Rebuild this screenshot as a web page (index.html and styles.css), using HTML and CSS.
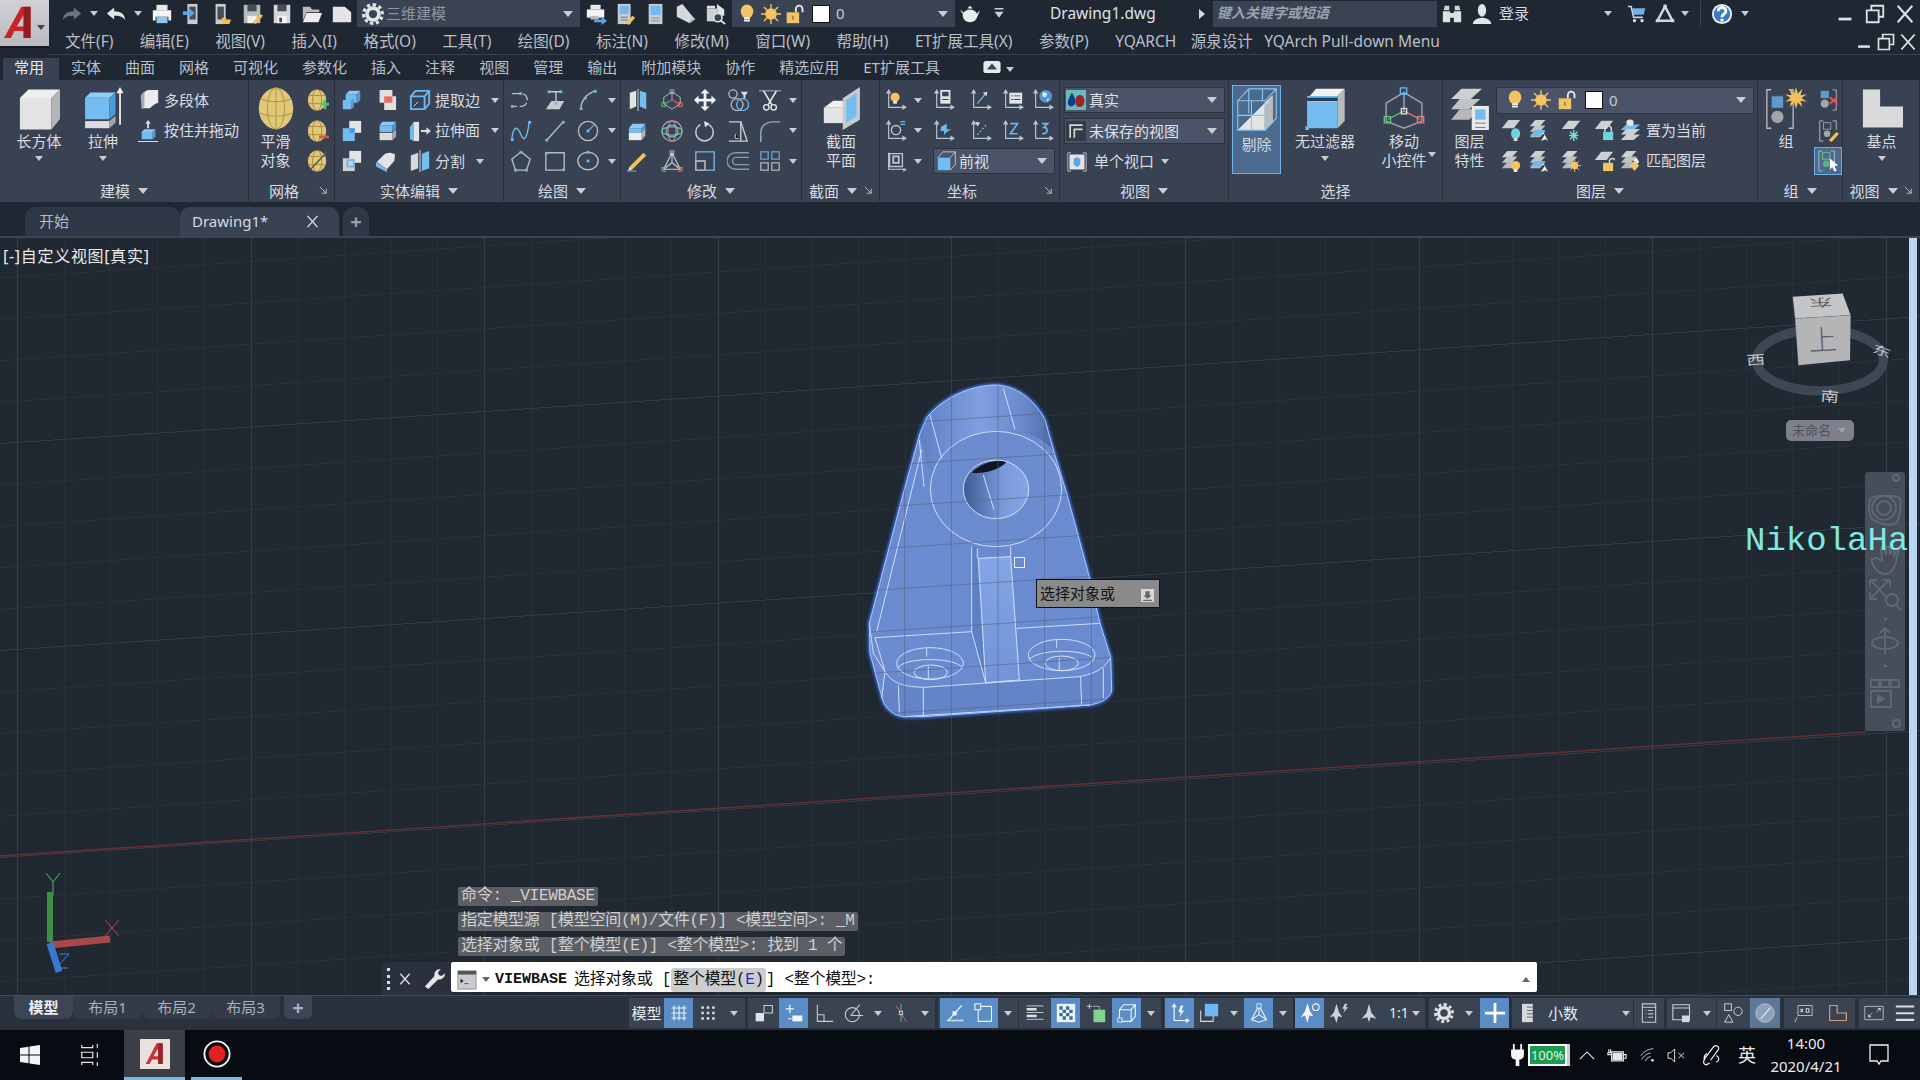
FILE: index.html
```html
<!DOCTYPE html>
<html lang="zh-CN">
<head>
<meta charset="utf-8">
<title>Drawing1.dwg</title>
<link rel="stylesheet" href="styles.css">
</head>
<body>
<svg class="defs" aria-hidden="true">
<defs>
<symbol id="redo" viewBox="0 0 24 24"><path fill="currentColor" d="M14 5l8 6.500-8 6.500v-4c-5 0-9 .5-12 4.500C2.500 12 7 9 14 9z"/></symbol>
<symbol id="undo" viewBox="0 0 24 24"><path fill="currentColor" d="M10 5l-8 6.500 8 6.500v-4c5 0 9 .5 12 4.500C21.500 12 17 9 10 9z"/></symbol>
<symbol id="print" viewBox="0 0 24 24"><path fill="#e8e9ea" d="M6 2h12v6H6z"/><path fill="#f5f5f5" d="M2 8h20v11h-3v-4H5v4H2z"/><path fill="#8cc4ee" d="M6 15h12v7H6z"/></symbol>
<symbol id="printgo" viewBox="0 0 24 24"><path fill="#e8e9ea" d="M6 2h11v5H6z"/><path fill="#f5f5f5" d="M2 7h19v9H2z"/><path fill="#bbb" d="M6 14h9v4H6z"/><path fill="#58a6e6" d="M10 18h8v-3l6 4.500-6 4.500v-3h-8z"/></symbol>
<symbol id="phone" viewBox="0 0 24 24"><path fill="#c9cbce" d="M7 1h11v22H7z"/><path fill="#454d59" d="M9 4h7v14H9z"/><path fill="#58a6e6" d="M2 9h7V6l6 5-6 5v-3H2z"/></symbol>
<symbol id="phonef" viewBox="0 0 24 24"><path fill="#c9cbce" d="M5 1h11v22H5z"/><path fill="#454d59" d="M7 4h7v14H7z"/><path fill="#f0c25a" d="M12 16h4l1 2h5l-2 5h-8z"/></symbol>
<symbol id="savepen" viewBox="0 0 24 24"><path fill="#b7b9bc" d="M3 2h18v20H3z"/><path fill="#454d59" d="M7 2h10v7H7z"/><path fill="#efefef" d="M7 14h10v8H7z"/><path fill="#f0c25a" d="M13 21l8-9 3 2-8 9z"/></symbol>
<symbol id="save" viewBox="0 0 24 24"><path fill="#d5d6d8" d="M3 2h18v20H3z"/><path fill="#454d59" d="M7 2h10v7H7z"/><path fill="#f5f5f5" d="M7 14h10v8H7z"/><path fill="#454d59" d="M9 16h3v5H9z"/></symbol>
<symbol id="open" viewBox="0 0 24 24"><path fill="#b7b9bc" d="M2 4h8l2 3h8v3H6l-4 9z"/><path fill="#ececec" d="M6 11h17l-4 10H2z"/></symbol>
<symbol id="newd" viewBox="0 0 24 24"><path fill="#e3e4e6" d="M2 4h13l7 6v11H2z"/></symbol>
<symbol id="gear" viewBox="0 0 24 24"><path fill="none" stroke="currentColor" stroke-width="3.500" stroke-dasharray="3.500 2.780" d="M12 1.800a10.200 10.200 0 1 1-.01 0z"/><circle cx="12" cy="12" r="6.500" fill="none" stroke="currentColor" stroke-width="4"/></symbol>
<symbol id="mon" viewBox="0 0 24 24"><path fill="#c9cbce" d="M3 1h14v22H3z"/><path fill="#73b8ee" d="M5 3h10v9H5z"/><path fill="#777" d="M6 15h8v1H6zM6 18h8v1H6z"/><path fill="#f0c25a" d="M12 22l7-8 3 2-7 8z"/></symbol>
<symbol id="mon2" viewBox="0 0 24 24"><path fill="#c9cbce" d="M4 1h15v22H4z"/><path fill="#73b8ee" d="M6 3h11v10H6z"/><path fill="#777" d="M7 16h9v1H7zM7 19h9v1H7z"/></symbol>
<symbol id="roll" viewBox="0 0 24 24"><path fill="#d7d8da" d="M2 4l6-3 14 17-6 4-14-7z"/><path fill="#9a9c9f" d="M16 22l6-4v-2l-6 4z"/></symbol>
<symbol id="findd" viewBox="0 0 24 24"><path fill="#e0e1e3" d="M2 3h9v3H2zM13 1l8 6v7h-7V7h-1z"/><path fill="#d0d1d3" d="M2 6h12v14H2z"/><circle cx="14" cy="16" r="4.500" fill="#3a4354" stroke="#ddd" stroke-width="1.800"/><path stroke="#ddd" stroke-width="2" d="M17 19l5 4"/></symbol>
<symbol id="bulb" viewBox="0 0 24 24"><ellipse cx="12" cy="9" rx="7.500" ry="8.500" fill="#f3c465"/><path fill="#f5f5f5" d="M8.500 16h7v5h-7z"/><path fill="#888" d="M8.500 18h7v1h-7z"/></symbol>
<symbol id="sun" viewBox="0 0 24 24"><circle cx="12" cy="12" r="7" fill="#f3c465"/><path stroke="#f3c465" stroke-width="1.600" d="M12 0v24M0 12h24M3.500 3.500l17 17M20.500 3.500l-17 17"/></symbol>
<symbol id="lock" viewBox="0 0 24 24"><rect x="2" y="10" width="15" height="13" fill="#f3c465"/><path fill="none" stroke="#e9e9e9" stroke-width="2.200" d="M13 10V6a4 4 0 0 1 8 0v4"/><path stroke="#8a6b25" stroke-width="1.600" d="M9.500 14v5"/></symbol>
<symbol id="teapot" viewBox="0 0 24 24"><ellipse cx="12" cy="14" rx="8" ry="7" fill="#ebeced"/><path fill="#ebeced" d="M1 7l6 5-1 3zM23 8l-3 7-2-2zM9 6h6l-3-3z"/></symbol>
<symbol id="qmore" viewBox="0 0 24 24"><path fill="#c9ccd1" d="M6 4h12v2H6zM6 9h12l-6 8z"/></symbol>
<symbol id="bino" viewBox="0 0 24 24"><path fill="#cfd1d4" d="M3 8l1-5h5v5zM15 3h5l1 5h-6z"/><path fill="#dfe0e2" d="M2 9h8v12H2zM14 9h8v12h-8zM10 11h4v5h-4z"/></symbol>
<symbol id="user" viewBox="0 0 24 24"><ellipse cx="12" cy="8" rx="4.500" ry="7" fill="#e3e4e6"/><path fill="#e3e4e6" d="M2 23c0-4 5-7 10-7s10 3 10 7z"/></symbol>
<symbol id="cart" viewBox="0 0 24 24"><path fill="none" stroke="#cfd1d4" stroke-width="2" d="M1 3h4l3 13h11"/><path fill="#6eb2e8" d="M6 5h16l-2 8H8z"/><circle cx="9" cy="20" r="2" fill="#ddd"/><circle cx="18" cy="20" r="2" fill="#ddd"/></symbol>
<symbol id="adsk" viewBox="0 0 24 24"><path fill="none" stroke="#d4d6d9" stroke-width="3" d="M12 3L3 20h18z"/><path fill="#d4d6d9" d="M10 1h4v4h-4zM1 18h4v4H1zM19 18h4v4h-4z"/></symbol>
<symbol id="help" viewBox="0 0 24 24"><circle cx="12" cy="12" r="11" fill="#f0f1f2"/><circle cx="12" cy="12" r="9" fill="#3979c9"/><path fill="none" stroke="#fff" stroke-width="3.200" d="M7.800 9c0-5.500 8.400-5.500 8.400 0 0 3-4.200 3-4.200 6.500"/><path fill="#fff" d="M10.300 17.200h3.400v3h-3.400z"/></symbol>
<symbol id="wmin" viewBox="0 0 24 24"><path fill="#dfe1e4" d="M5 16h14v3H5z"/></symbol>
<symbol id="wmax" viewBox="0 0 24 24"><path fill="none" stroke="#dfe1e4" stroke-width="2" d="M8 8V3h13v12h-5M3 8h13v13H3z"/></symbol>
<symbol id="wx" viewBox="0 0 24 24"><path stroke="#dfe1e4" stroke-width="2.200" d="M4 3l16 18M20 3L4 21"/></symbol>

<symbol id="bigbox" viewBox="0 0 44 44"><path fill="#efefef" d="M11 2h33l-9 9H2z"/><path fill="#e3e3e4" d="M2 11h33v33H2z"/><path fill="#b4b5b7" d="M35 11l9-9v31l-9 11z"/></symbol>
<symbol id="extrude" viewBox="0 0 44 48"><path fill="#92cdf5" d="M8 6h28l-7 6H2z"/><path fill="#74bdf1" d="M2 12h27v24H2z"/><path fill="#4d9bd6" d="M29 12l7-6v24l-7 6z"/><path fill="#dcdcdc" d="M2 38h27v8H2z"/><path fill="#a3a4a6" d="M29 38l7-6v8l-7 6z"/><path stroke="#eee" stroke-width="2" d="M41 4v38"/><path fill="#eee" d="M41 0l4 7h-8z"/></symbol>
<symbol id="polys" viewBox="0 0 24 24"><path fill="#ececec" d="M6 6c0-3 3-5 7-5h9v14c-3 1-6 3-9 6H4z"/><path fill="#a8aaad" d="M3 9c0-3 2-5 4-6v16l-3 3z"/></symbol>
<symbol id="press" viewBox="0 0 24 24"><path fill="#8ccaf4" d="M7 10h12l-3 3H4z"/><path fill="#74bdf1" d="M4 13h12v8H4z"/><path fill="#4d9bd6" d="M16 13l3-3v8l-3 3z"/><path fill="#ddd" d="M11 0l3 4h-2v5h-2V4H8zM0 23h22v1H0z"/></symbol>
<symbol id="smooth" viewBox="0 0 40 50"><ellipse cx="20" cy="25" rx="20" ry="24" fill="#e0c878"/><g fill="none" stroke="#b6984a" stroke-width="1.200"><ellipse cx="20" cy="25" rx="10" ry="24"/><path d="M20 1v48M2 14c10 4 26 4 36 0M1 30c10 5 28 5 38 0"/></g></symbol>
<symbol id="mesh" viewBox="0 0 24 24"><ellipse cx="11" cy="12" rx="10" ry="11.500" fill="#e0c878"/><g fill="none" stroke="#a78a42"><ellipse cx="11" cy="12" rx="5" ry="11.500"/><path d="M2 7h18M1 16h20"/></g></symbol>
<symbol id="meshp" viewBox="0 0 24 24"><use href="#mesh"/><path fill="#55c065" d="M15 15h3v-3h3v3h3v3h-3v4h-3v-4h-3z"/></symbol>
<symbol id="meshm" viewBox="0 0 24 24"><use href="#mesh"/><path fill="#d7574d" d="M13 17h11v3H13z"/></symbol>
<symbol id="meshs" viewBox="0 0 24 24"><use href="#mesh"/><path stroke="#555" stroke-width="1.500" d="M3 22L22 2"/></symbol>
<symbol id="uni" viewBox="0 0 24 24"><path fill="#8ccaf4" d="M9 2h12l-4 4H5z"/><path fill="#74bdf1" d="M5 6h12v9H5zM2 12h9v10H2z"/><path fill="#4d9bd6" d="M17 6l4-4v10l-4 4zM11 12l3-2v10l-3 2z"/></symbol>
<symbol id="sub" viewBox="0 0 24 24"><path fill="#e0e0e1" d="M5 1h14v14H5zM10 8h13v15H10z"/><path fill="#e96a63" d="M10 8h9v7h-9z"/></symbol>
<symbol id="edges" viewBox="0 0 24 24"><path fill="none" stroke="#6eb8ee" stroke-width="2" d="M2 8h15v14H2zM2 8l5-6h15v14l-5 6M17 8l5-6"/><path fill="none" stroke="#ddd" d="M5 19l5-5"/></symbol>
<symbol id="inter" viewBox="0 0 24 24"><path fill="#e3e3e4" d="M9 1h13v13H9z"/><path fill="#74bdf1" d="M2 9h13v14H2z"/><path fill="#4d9bd6" d="M9 9h6v5H9z"/></symbol>
<symbol id="press2" viewBox="0 0 24 24"><path fill="#8ccaf4" d="M8 2h15l-4 4H5z"/><path fill="#74bdf1" d="M5 6h14v7H5z"/><path fill="#4d9bd6" d="M19 6l4-4v7l-4 4z"/><path fill="#dcdcdc" d="M5 14h14v8H5z"/><path fill="#aaa" d="M19 14l4-4v8l-4 4z"/></symbol>
<symbol id="extf" viewBox="0 0 24 24"><path fill="#6eb8ee" d="M1 8l4-6v21l-4-2z"/><path fill="#e4e4e5" d="M5 2h6v21H5z"/><path fill="#ddd" d="M13 11h6V8l5 4-5 4v-3h-6z"/></symbol>
<symbol id="unionb" viewBox="0 0 24 24"><path fill="#e3e3e4" d="M9 1h13v13H9z"/><path fill="#d0d0d1" d="M2 9h13v14H2z"/><path fill="none" stroke="#6eb8ee" stroke-width="2" d="M7 11h7v7H7z"/></symbol>
<symbol id="fillet3" viewBox="0 0 24 24"><path fill="#e3e3e4" d="M2 13l8-8c3-2 7-3 12 0l-1 7-8 9z"/><path fill="#74bdf1" d="M1 13l12 8v3L1 18z"/></symbol>
<symbol id="slice" viewBox="0 0 24 24"><path fill="#d8d8d9" d="M2 6l8-3v17l-8 3z"/><path fill="#74bdf1" d="M14 4l8-3v19l-8 3z"/><path stroke="#e6e6e6" d="M12 0v24"/></symbol>
<symbol id="d-poly" viewBox="0 0 24 24"><path fill="none" stroke="#b9bcc1" stroke-width="1.500" stroke-dasharray="9 3" d="M2 5h10c9 0 9 14 0 14H2"/><g fill="#6eb8ee"><rect x="10" y="3.500" width="3" height="3"/><rect x="1" y="17.500" width="3" height="3"/></g></symbol>
<symbol id="d-3d" viewBox="0 0 24 24"><path fill="#c7c9cc" d="M2 22l6-9h14l-5 9z"/><path fill="none" stroke="#c7c9cc" stroke-width="1.500" d="M6 3h12M13 3v14"/><g fill="#6eb8ee"><rect x="4" y="1.500" width="3" height="3"/><rect x="17" y="1.500" width="3" height="3"/><rect x="11.500" y="14" width="3" height="3"/></g></symbol>
<symbol id="d-arc" viewBox="0 0 24 24"><path fill="none" stroke="#b9bcc1" stroke-width="1.500" d="M4 22C5 11 11 5 20 2"/><g fill="#6eb8ee"><rect x="3" y="20" width="3" height="3"/><rect x="18.500" y="1" width="3" height="3"/><rect x="7.500" y="8.500" width="3" height="3"/></g></symbol>
<symbol id="d-spl" viewBox="0 0 24 24"><path fill="none" stroke="#6eb8ee" stroke-width="1.500" d="M2 22C3 7 8 6 11 14s7 12 10-12"/><g fill="#6eb8ee"><rect x="1" y="20" width="3" height="3"/><rect x="20" y="1" width="3" height="3"/></g></symbol>
<symbol id="d-line" viewBox="0 0 24 24"><path stroke="#b9bcc1" stroke-width="1.500" d="M3 22L21 2"/><g fill="#6eb8ee"><rect x="1.500" y="20.500" width="3" height="3"/><rect x="19.500" y="1" width="3" height="3"/></g></symbol>
<symbol id="d-cir" viewBox="0 0 24 24"><circle cx="12" cy="12" r="10.500" fill="none" stroke="#b9bcc1" stroke-width="1.500"/><path stroke="#6eb8ee" stroke-width="1.200" d="M12 12l7-7"/><rect x="10.500" y="10.500" width="3" height="3" fill="#6eb8ee"/></symbol>
<symbol id="d-pgn" viewBox="0 0 24 24"><path fill="none" stroke="#b9bcc1" stroke-width="1.500" d="M12 2l10 8-4 12H6L2 10z"/><g fill="#6eb8ee"><rect x="10.500" y="1" width="3" height="3"/><rect x="4.500" y="20.500" width="3" height="3"/><rect x="16.500" y="20.500" width="3" height="3"/></g></symbol>
<symbol id="d-rect" viewBox="0 0 24 24"><path fill="none" stroke="#b9bcc1" stroke-width="1.500" d="M2 3h20v19H2z"/><g fill="#6eb8ee"><rect x="1" y="2" width="3" height="3"/><rect x="20" y="20" width="3" height="3"/></g></symbol>
<symbol id="d-ell" viewBox="0 0 24 24"><ellipse cx="12" cy="12" rx="11" ry="9.500" fill="none" stroke="#b9bcc1" stroke-width="1.500"/><g fill="#6eb8ee"><rect x="10.500" y="10.500" width="3" height="3"/><rect x="10.500" y="1" width="3" height="3"/></g></symbol>
<symbol id="m-mirror" viewBox="0 0 24 24"><path fill="#e3e3e4" d="M3 4l7-2v17l-7 3z"/><path fill="#74bdf1" d="M14 2l7 2v18l-7-3z"/><path stroke="#ddd" d="M12 0v24"/></symbol>
<symbol id="m-3dm" viewBox="0 0 24 24"><path fill="none" stroke="#b9bcc1" d="M12 3l9 6v7l-9 6-9-6V9z"/><path stroke="#cfa0d0" d="M12 3v9"/><path stroke="#e57a73" d="M12 12l9 5"/><path stroke="#62c178" d="M12 12l-9 5"/><g fill="none"><rect x="10" y="1" width="4" height="4" stroke="#6eb8ee"/><rect x="19" y="15" width="4" height="4" stroke="#e57a73"/><rect x="1" y="15" width="4" height="4" stroke="#62c178"/></g></symbol>
<symbol id="m-move" viewBox="0 0 24 24"><path fill="#f2f2f2" d="M12 0l5 5h-3.500v5.500H19V7l5 5-5 5v-3.500h-5.500V19H17l-5 5-5-5h3.500v-5.500H5V17l-5-5 5-5v3.500h5.500V5H7z"/></symbol>
<symbol id="m-arr" viewBox="0 0 24 24"><g fill="none" stroke="#b9bcc1" stroke-width="1.400"><rect x="2" y="1" width="9" height="9" rx="4.500"/><circle cx="11" cy="17" r="6.500"/><circle cx="17" cy="17" r="6.500" stroke="#6eb8ee"/></g><path fill="#ddd" d="M15 3h8l-3 4v3h-2V7z"/></symbol>
<symbol id="m-trim" viewBox="0 0 24 24"><path stroke="#e8e8e8" stroke-width="1.800" d="M5 2l9 15M19 2l-9 15"/><circle cx="8" cy="20" r="3" fill="none" stroke="#e8e8e8" stroke-width="1.500"/><circle cx="16" cy="20" r="3" fill="none" stroke="#e8e8e8" stroke-width="1.500"/><path stroke="#b9bcc1" d="M0 2h24"/></symbol>
<symbol id="m-box" viewBox="0 0 24 24"><path fill="#8ccaf4" d="M6 4h14l-4 5H2z"/><path fill="#74bdf1" d="M2 9h14v5H2z"/><path fill="#4d9bd6" d="M16 9l4-5v5l-4 5z"/><path fill="#ececec" d="M2 14h14v8H2z"/><path fill="#b4b5b7" d="M16 14l4-5v8l-4 5z"/></symbol>
<symbol id="m-globe" viewBox="0 0 24 24"><g fill="none" stroke-width="1.300"><circle cx="12" cy="12" r="11" stroke="#a8aaad"/><ellipse cx="12" cy="12" rx="11" ry="4.500" stroke="#62c178"/><ellipse cx="12" cy="12" rx="4.500" ry="11" stroke="#e57a73"/><circle cx="12" cy="12" r="6.500" stroke="#6eb8ee"/></g></symbol>
<symbol id="m-rot" viewBox="0 0 24 24"><path fill="none" stroke="#c9cbce" stroke-width="1.500" d="M16 5a9.500 9.500 0 1 1-9 0"/><path fill="#e8e8e8" d="M11 1l6 3-5 4z"/></symbol>
<symbol id="m-str" viewBox="0 0 24 24"><path fill="none" stroke="#c9cbce" stroke-width="1.500" d="M2 2h13v21H2"/><path fill="none" stroke="#c9cbce" stroke-width="1.500" d="M15 2l7 21h-7"/><path stroke="#ddd" d="M9 15v5h4"/></symbol>
<symbol id="m-fil" viewBox="0 0 24 24"><path fill="none" stroke="#9fa3a9" stroke-width="1.500" d="M2 24V14C2 6 8 2 16 2h7"/><path fill="none" stroke="#6eb8ee" d="M2 24v-6"/></symbol>
<symbol id="m-pen" viewBox="0 0 24 24"><path fill="#f0c25a" d="M3 18L18 3l3 3L6 21z"/><path fill="#eee" d="M3 18l3 3-5 2z"/><path stroke="#6eb8ee" d="M0 23h10"/></symbol>
<symbol id="m-tri" viewBox="0 0 24 24"><path fill="none" stroke="#c9cbce" stroke-width="1.300" d="M12 3L3 21h18zM12 3v11M12 14l-9 7M12 14l9 7"/><g fill="none"><rect x="10" y="1" width="4" height="4" stroke="#c9cbce"/><rect x="1" y="19" width="4" height="4" stroke="#62c178"/><rect x="19" y="19" width="4" height="4" stroke="#e57a73"/></g></symbol>
<symbol id="m-scale" viewBox="0 0 24 24"><path fill="none" stroke="#c9cbce" stroke-width="1.500" d="M2 12h10v10H2z"/><path fill="none" stroke="#6eb8ee" stroke-width="1.500" d="M2 12V2h20v20H12"/></symbol>
<symbol id="m-off" viewBox="0 0 24 24"><path fill="none" stroke="#7f9cb4" stroke-width="1.500" d="M24 3H9a9 9 0 0 0 0 18h15M24 8H10a4 4 0 0 0 0 8h14"/></symbol>
<symbol id="m-grid" viewBox="0 0 24 24"><g fill="none" stroke="#6ea8d6" stroke-width="1.300"><rect x="2" y="2" width="8" height="8"/><rect x="14" y="2" width="8" height="8"/></g><g fill="none" stroke="#b9bcc1" stroke-width="1.300"><rect x="2" y="14" width="8" height="8"/><rect x="14" y="14" width="8" height="8"/></g></symbol>
<symbol id="section" viewBox="0 0 44 50"><path fill="#efefef" d="M2 24l11-8h24l-11 8z"/><path fill="#e3e3e4" d="M2 24h24v18H2z"/><path fill="#c9cacc" d="M24 13l20-13v38L24 50z"/><path fill="#74bdf1" d="M28 15l12-8v27l-12 8z"/></symbol>
<symbol id="axes" viewBox="0 0 24 24"><path fill="none" stroke="#b9c3cf" stroke-width="1.300" d="M4 3v17h18"/><path fill="#b9c3cf" d="M4 0l3 5H1zM24 20l-5 3v-6z"/></symbol>
<symbol id="u-bulb" viewBox="0 0 24 24"><use href="#axes"/><circle cx="11" cy="9" r="5" fill="#f3c465"/><rect x="9" y="13" width="4" height="3" fill="#eee"/></symbol>
<symbol id="u-mon" viewBox="0 0 24 24"><use href="#axes"/><path fill="#e3e4e6" d="M8 1h11v15H8z"/><path fill="#3a4354" d="M10 3h7v5h-7zM10 11h7v1h-7z"/></symbol>
<symbol id="u-a" viewBox="0 0 24 24"><use href="#axes"/><path stroke="#6eb8ee" stroke-width="1.500" d="M8 16l9-11"/><path fill="#ddd" d="M14 4l5-1-1 5z"/></symbol>
<symbol id="u-tab" viewBox="0 0 24 24"><use href="#axes"/><path fill="#e3e4e6" d="M8 4h14v12H8z"/><path fill="#3a4354" d="M10 7h2v1h-2zM13 7h7v1h-7zM10 11h2v1h-2zM13 11h7v1h-7z"/></symbol>
<symbol id="u-glb" viewBox="0 0 24 24"><use href="#axes"/><circle cx="15" cy="8" r="7" fill="#4e95d3"/><path fill="#dfe8f0" d="M12 3l5 2-2 4-4-1zM16 11l3-1-2 4z"/></symbol>
<symbol id="u-x" viewBox="0 0 24 24"><use href="#axes"/><circle cx="12" cy="11" r="5" fill="none" stroke="#c9cbce" stroke-width="1.500"/><path fill="#6eb8ee" d="M17 1h5v1.500h-5zM17 4h5v1.500h-5z"/></symbol>
<symbol id="u-b" viewBox="0 0 24 24"><use href="#axes"/><path fill="#6eb8ee" d="M9 7l6-3v6l5 0-6 4-2 3v-5H8z"/></symbol>
<symbol id="u-c" viewBox="0 0 24 24"><use href="#axes"/><path stroke="#6eb8ee" stroke-dasharray="2 2" stroke-width="1.500" d="M8 16l10-11"/><path fill="#ddd" d="M6 2l5 1-3 4z"/></symbol>
<symbol id="u-z" viewBox="0 0 24 24"><use href="#axes"/><path fill="none" stroke="#6eb8ee" stroke-width="1.800" d="M9 4h8L9 15h8"/></symbol>
<symbol id="u-3" viewBox="0 0 24 24"><use href="#axes"/><path fill="none" stroke="#6eb8ee" stroke-width="1.800" d="M11 4h6l-4 4c5 0 5 7-2 7"/></symbol>
<symbol id="u-box" viewBox="0 0 24 24"><path fill="none" stroke="#c9cbce" stroke-width="1.300" d="M4 3v18h18"/><path fill="none" stroke="#b9c3cf" stroke-width="1.500" d="M5 4h14v14H5z"/><path fill="#b9c3cf" d="M8 6h8v9H8zM20 20l4 1-4 3z"/><path fill="#3a4354" d="M10 8h4v5h-4z"/></symbol>
<symbol id="frontb" viewBox="0 0 24 24"><path fill="#74bdf1" d="M1 8h15v15H1z"/><path fill="none" stroke="#d5d7da" d="M1 8l6-7h15v15l-6 7M16 8l6-7"/></symbol>
<symbol id="real" viewBox="0 0 24 24"><rect width="24" height="24" fill="#6ab8c0"/><path fill="#123d8a" d="M7 3c3 5 5 8 4 13-2 5-8 5-9 0 0-5 3-8 5-13z"/><path fill="#9a2326" d="M16 6c4 0 7 3 6 9-1 6-8 7-10 3-2-5 0-12 4-12z"/></symbol>
<symbol id="unsaved" viewBox="0 0 24 24"><rect width="24" height="24" fill="#343b45"/><path fill="none" stroke="#d8d8d8" stroke-width="2" d="M5 20V5h15M10 20V10h10"/></symbol>
<symbol id="single" viewBox="0 0 24 24"><path fill="none" stroke="#c9cbce" d="M5 1H1v22h4M19 1h4v22h-4"/><rect x="3" y="3" width="18" height="18" fill="#e4e4e5"/><path fill="#5aa7e6" d="M8 8l4-2 4 2v7l-4 3-4-3z"/></symbol>
<symbol id="hide" viewBox="0 0 46 48"><path fill="#e4e4e5" d="M2 47l38-38v30l-9 8z"/><path fill="#b9babc" d="M31 22l9-13v30l-9 8z"/><path fill="none" stroke="#8cc8f0" stroke-width="1.200" d="M2 15h30v32H2zM2 15L14 2h30v32L32 47M32 15L44 2M2 31h30M17 15v32M14 2v27M29 2v13"/></symbol>
<symbol id="nofil" viewBox="0 0 44 48"><path fill="#f2f2f2" d="M12 2h32l-8 8H5z"/><path fill="#b9babc" d="M36 10l8-8v36l-8 8z"/><path fill="#74bdf1" d="M2 10h34v36H2z"/><path fill="#1f3e58" d="M2 12h34v5H2z"/><path fill="#fff" d="M2 16h34v1H2z"/><rect x="0" y="44" width="4" height="4" fill="#74bdf1"/></symbol>
<symbol id="gizmo" viewBox="0 0 44 48"><path fill="none" stroke="#a4a7ac" stroke-width="1.500" d="M22 6l20 12v20L22 46 2 38V18z"/><path stroke="#8fb8dc" stroke-width="1.500" d="M22 6v21"/><path stroke="#e57a73" stroke-width="1.500" d="M22 27l18 9"/><path stroke="#62c178" stroke-width="1.500" d="M22 27L4 36"/><g fill="none" stroke-width="1.500"><rect x="18" y="1" width="7" height="7" stroke="#6eb8ee"/><rect x="37" y="33" width="7" height="7" stroke="#e57a73"/><rect x="0" y="33" width="7" height="7" stroke="#62c178"/><rect x="19" y="24" width="6" height="6" stroke="#ddd"/></g></symbol>
<symbol id="layerp" viewBox="0 0 44 50"><path fill="#cfd0d2" d="M12 2h24l-13 12H0z"/><path fill="#c2c3c5" d="M10 14h24l-13 12H0z"/><path fill="#b7b8ba" d="M10 26h24l-13 12H0z"/><path fill="#e8e8e9" d="M24 22h20v30H24z"/><path fill="#74bdf1" d="M28 26h12v12H28z"/><path stroke="#666" d="M28 42h12M28 47h12"/></symbol>
<symbol id="sheet" viewBox="0 0 24 24"><path fill="#cfd0d2" d="M2 16l7-9h13l-7 9z"/></symbol>
<symbol id="l-bulb" viewBox="0 0 24 24"><use href="#sheet" transform="translate(0 -6)"/><ellipse cx="17" cy="16" rx="5" ry="6" fill="#6cd4dd"/><rect x="15" y="21" width="4" height="3" fill="#e0e0e0"/></symbol>
<symbol id="stack" viewBox="0 0 24 24"><path fill="#cfd0d2" d="M2 8l6-7h11l-6 7z"/><path fill="#c2c3c5" d="M2 14l6-7h11l-6 7z"/><path fill="#b7b8ba" d="M2 20l6-7h11l-6 7z"/></symbol>
<symbol id="l-arrow" viewBox="0 0 24 24"><use href="#stack"/><path fill="#6eb8ee" d="M2 18l6-6h11l-6 6z"/><path fill="#eee" d="M14 24l5-8-5 1 3-2 5 9-3-2z"/></symbol>
<symbol id="l-snow" viewBox="0 0 24 24"><use href="#sheet" transform="translate(0 -5)"/><path stroke="#7fdde0" stroke-width="1.500" d="M15 12v12M10 18h10M11 14l8 8M19 14l-8 8"/></symbol>
<symbol id="l-lockb" viewBox="0 0 24 24"><use href="#sheet" transform="translate(0 -5)"/><rect x="11" y="14" width="11" height="9" fill="#6cd4dd"/><path fill="none" stroke="#ddd" stroke-width="1.600" d="M13 14v-3a3.500 3.500 0 0 1 7 0v3"/></symbol>
<symbol id="l-cur" viewBox="0 0 24 24"><path fill="#74bdf1" d="M2 12l6-6h15l-7 6z"/><path fill="#cfd0d2" d="M2 17l6-6h15l-7 6zM2 23l6-6h15l-7 6z"/><ellipse cx="12" cy="4" rx="4" ry="3.500" fill="#e4e4e5"/></symbol>
<symbol id="l-yb" viewBox="0 0 24 24"><use href="#stack"/><circle cx="17" cy="17" r="5" fill="#f3c465"/><rect x="15" y="21" width="4" height="3" fill="#eee"/></symbol>
<symbol id="l-ys" viewBox="0 0 24 24"><use href="#stack"/><circle cx="16" cy="17" r="4" fill="#f3c465"/><path stroke="#f3c465" d="M16 10v14M9 17h14M11 12l10 10M21 12L11 22"/></symbol>
<symbol id="l-yl" viewBox="0 0 24 24"><use href="#sheet" transform="translate(0 -5)"/><rect x="11" y="14" width="11" height="9" fill="#f3c465"/><path fill="none" stroke="#ddd" stroke-width="1.600" d="M18 14v-3a3.500 3.500 0 0 1 6 0"/></symbol>
<symbol id="l-match" viewBox="0 0 24 24"><use href="#stack"/><path fill="#f3c465" d="M12 17l5-5 5 5-5 6z"/><path fill="#eee" d="M15 11l4-3 3 5-2 2z"/></symbol>
<symbol id="grp" viewBox="0 0 32 50"><path fill="none" stroke="#b9bcc1" stroke-width="1.500" d="M6 3H1v44h5M26 3h5v44h-5"/><rect x="6" y="10" width="14" height="14" fill="#5b9bd0" stroke="#444c58"/><circle cx="13" cy="34" r="7" fill="#a3a5a8"/></symbol>
<symbol id="star" viewBox="0 0 24 24"><path fill="#f0be5a" d="M12 0l2 7 5-5-2 7 7-1-6 4 6 4-7-1 2 7-5-5-2 7-2-7-5 5 2-7-7 1 6-4-6-4 7 1-2-7 5 5z"/></symbol>
<symbol id="grpx" viewBox="0 0 24 24"><path fill="none" stroke="#b9bcc1" d="M17 1h4v22h-4"/><rect x="4" y="2" width="9" height="8" fill="#5b9bd0"/><circle cx="8.500" cy="16" r="4.500" fill="#a3a5a8"/><path stroke="#e5534b" stroke-width="2.200" d="M14 9l8 7M22 9l-8 7"/></symbol>
<symbol id="grpe" viewBox="0 0 24 24"><path fill="none" stroke="#b9bcc1" d="M7 1H3v22h4M17 1h4v10"/><rect x="7" y="3" width="8" height="7" fill="none" stroke="#8fa3b8"/><circle cx="11" cy="15" r="3.500" fill="#a3a5a8"/><path fill="#f0c25a" d="M13 22l8-9 3 2-8 9z"/></symbol>
<symbol id="grps" viewBox="0 0 24 24"><path fill="none" stroke="#b9bcc1" d="M6 1H2v22h4M15 1h4v14"/><rect x="6" y="3" width="8" height="7" fill="none" stroke="#6ecb8a"/><circle cx="10" cy="15" r="3.500" fill="#56b877"/><path fill="#fff" d="M14 9l9 8-4 .5 2.500 5-2.500 1-2.500-5-2.500 3z"/></symbol>
<symbol id="base" viewBox="0 0 44 44"><path fill="#d9dadc" d="M2 2h18v18h24v22H2z"/></symbol>
<symbol id="corner" viewBox="0 0 10 10"><path fill="none" stroke="#c9ccd1" d="M1 1l7 7M8 3v5H3"/></symbol>
<symbol id="dropup" viewBox="0 0 20 14"><rect width="20" height="14" rx="3" fill="#e6e7e9"/><path fill="#3a4354" d="M10 3l6 7H4z"/></symbol>
<symbol id="s-grid" viewBox="0 0 24 24"><path stroke="#f0f3f7" stroke-width="1.300" d="M6 3v18M12 3v18M18 3v18M3 6h18M3 12h18M3 18h18"/></symbol>
<symbol id="s-dots" viewBox="0 0 24 24"><g fill="#dcdee1"><rect x="4" y="4" width="3" height="3"/><rect x="10.500" y="4" width="3" height="3"/><rect x="17" y="4" width="3" height="3"/><rect x="4" y="10.500" width="3" height="3"/><rect x="10.500" y="10.500" width="3" height="3"/><rect x="17" y="10.500" width="3" height="3"/><rect x="4" y="17" width="3" height="3"/><rect x="10.500" y="17" width="3" height="3"/><rect x="17" y="17" width="3" height="3"/></g></symbol>
<symbol id="s-step" viewBox="0 0 24 24"><path fill="#e3e4e6" d="M2 12h10v10H2z"/><path fill="none" stroke="#c9cbce" stroke-width="1.300" d="M12 12V3h10v9z"/></symbol>
<symbol id="s-plus" viewBox="0 0 24 24"><path stroke="#f0f3f7" stroke-width="1.500" d="M7 2v10M2 7h10"/><path stroke="#f0f3f7" stroke-width="1.300" d="M5 19h4"/><rect x="10" y="15" width="12" height="7" fill="#f0f3f7"/></symbol>
<symbol id="s-l" viewBox="0 0 24 24"><path fill="none" stroke="#c9cbce" stroke-width="1.300" d="M4 2v20h19M4 14h8v8"/></symbol>
<symbol id="s-pol" viewBox="0 0 24 24"><circle cx="10" cy="14" r="8.500" fill="none" stroke="#c9cbce" stroke-width="1.300"/><path stroke="#c9cbce" stroke-width="1.300" d="M8 15L19 2M8 15h15"/></symbol>
<symbol id="s-os" viewBox="0 0 24 24"><path stroke="#e5605a" stroke-width="1.200" d="M6 3l12 19"/><path stroke="#5cc07a" stroke-width="1.200" d="M12 1v22"/><rect x="10" y="10" width="4" height="4" fill="#4a5365" stroke="#ddd"/></symbol>
<symbol id="s-ang" viewBox="0 0 24 24"><path stroke="#f0f3f7" stroke-width="1.400" d="M4 21L20 3"/><rect x="9" y="10" width="5" height="5" fill="#f0f3f7"/><path stroke="#cbd8e6" stroke-width="2" d="M2 21h20"/></symbol>
<symbol id="s-rect" viewBox="0 0 24 24"><path fill="none" stroke="#f0f3f7" stroke-width="1.300" d="M5 4h16v18H5z"/><rect x="1" y="1" width="7" height="7" fill="#5a8dc6" stroke="#f0f3f7" stroke-width="1.300"/></symbol>
<symbol id="s-lw" viewBox="0 0 24 24"><g fill="#dfe0e2"><path d="M2 3h20v1H2z"/><path d="M2 6h12v3H2z"/><path d="M2 11h20v1H2z"/><path d="M2 14h12v3H2z"/><path d="M2 19h20v1H2z"/></g></symbol>
<symbol id="s-chk" viewBox="0 0 24 24"><rect x="1" y="1" width="22" height="22" fill="#f0f3f7"/><path fill="#3f6c9e" d="M4 4h4v4H4zM12 4h4v4h-4zM8 8h4v4H8zM16 8h4v4h-4zM4 12h4v4H4zM12 12h4v4h-4zM8 16h4v4H8zM16 16h4v4h-4z"/></symbol>
<symbol id="s-selc" viewBox="0 0 24 24"><path stroke="#d6d8db" d="M4 1v6M1 4h6"/><path fill="none" stroke="#b9bcc1" d="M8 4h8v5"/><rect x="9" y="8" width="14" height="15" fill="#7fd58f"/></symbol>
<symbol id="s-3d" viewBox="0 0 24 24"><path fill="none" stroke="#f0f3f7" stroke-width="1.300" d="M3 8h14v14H3zM3 8l5-6h14v14l-5 6M17 8l5-6"/><rect x="1" y="18" width="5" height="5" fill="#5a8dc6" stroke="#f0f3f7"/></symbol>
<symbol id="s-axes" viewBox="0 0 24 24"><path fill="none" stroke="#f0f3f7" stroke-width="1.400" d="M5 4v17h16"/><path fill="#f0f3f7" d="M5 0l3 5H2zM24 21l-5 3v-6zM13 3l-3 8h3l-2 6 6-8h-3l2-6z"/></symbol>
<symbol id="s-blue" viewBox="0 0 24 24"><path fill="none" stroke="#d6d8db" stroke-width="1.300" d="M2 9v13h15V14"/><rect x="7" y="1" width="16" height="15" fill="#6eb8fa"/></symbol>
<symbol id="s-giz" viewBox="0 0 24 24"><path fill="none" stroke="#f0f3f7" stroke-width="1.300" d="M12 3L3 20l9 3 9-3zM12 3v11M12 14l-9 6M12 14l9 6"/><rect x="9.500" y="1" width="5" height="5" fill="#5a8dc6" stroke="#f0f3f7"/></symbol>
<symbol id="s-anno" viewBox="0 0 24 24"><path fill="#f4f4f4" d="M9 0l3 10 4 6-5-1-2 9-3-9-5 2 5-7z"/><circle cx="19" cy="5" r="4" fill="none" stroke="#f4f4f4" stroke-width="1.300"/></symbol>
<symbol id="s-anno2" viewBox="0 0 24 24"><path fill="#cfd1d4" d="M9 1l3 10 4 6-5-1-2 8-3-8-5 1 5-6z"/><path fill="#cfd1d4" d="M19 1l-3 6h3l-2 5 6-7h-3l2-4z"/></symbol>
<symbol id="s-anno3" viewBox="0 0 24 24"><path fill="#cfd1d4" d="M12 1l3 11 6 7-7-2-2 6-2-6-7 2 6-7z"/></symbol>
<symbol id="s-ruler" viewBox="0 0 24 24"><path fill="#d6d8db" d="M6 1h13v22H6z"/><path stroke="#4a5365" d="M12 5h7M12 9h7M12 13h7M12 17h7"/></symbol>
<symbol id="s-list" viewBox="0 0 24 24"><path fill="none" stroke="#c9cbce" stroke-width="1.300" d="M4 1h16v22H4zM4 5h16"/><path stroke="#c9cbce" stroke-width="1.300" d="M8 9h1M11 9h6M8 13h1M11 13h6M8 17h1M11 17h6"/></symbol>
<symbol id="s-win" viewBox="0 0 24 24"><path fill="none" stroke="#c9cbce" stroke-width="1.300" d="M1 2h20v18H1zM1 6h20"/><rect x="12" y="15" width="9" height="8" fill="#d5d6d8"/></symbol>
<symbol id="s-sh" viewBox="0 0 24 24"><g fill="none" stroke="#c9cbce" stroke-width="1.200"><rect x="2" y="1" width="8" height="8"/><circle cx="18" cy="10" r="5"/><path d="M7 14l5 9H2z"/></g></symbol>
<symbol id="s-perf" viewBox="0 0 24 24"><circle cx="12" cy="12" r="11" fill="#8da3bb" stroke="#bfcbd7"/><path stroke="#dce4ec" stroke-width="1.500" d="M7 19L18 6"/></symbol>
<symbol id="s-xo" viewBox="0 0 24 24"><path fill="none" stroke="#c9cbce" d="M6 3h17v12H6z"/><path stroke="#c9cbce" stroke-width="1.500" d="M9 7l3 4M12 7l-3 4M16 7h3v4h-3z"/><path stroke="#c9cbce" d="M5 17l-3 6"/></symbol>
<symbol id="s-lsh" viewBox="0 0 24 24"><path fill="none" stroke="#d69d72" stroke-width="1.400" d="M2 3h9v9h11v9H2z"/></symbol>
<symbol id="s-full" viewBox="0 0 24 24"><path fill="none" stroke="#c9cbce" d="M1 4h22v16H1z"/><path stroke="#c9cbce" d="M5 17l5-5M15 11l5-5"/><path fill="#c9cbce" d="M5 17v-4l4 4zM20 6v4l-4-4z"/></symbol>
<symbol id="s-menu" viewBox="0 0 24 24"><path fill="#dcdee1" d="M1 3h22v2.500H1zM1 11h22v2.500H1zM1 19h22v2.500H1z"/></symbol>
<symbol id="term" viewBox="0 0 22 22"><rect x="1" y="1" width="20" height="20" fill="#c9cbce" stroke="#8d9095"/><path fill="#555" d="M1 1h20v4H1z"/><path stroke="#555" d="M4 10l3 2-3 2M8 15h5"/></symbol>
<symbol id="wrench" viewBox="0 0 24 24"><path fill="#e4e5e7" d="M1 21l11-12c-1-4 2-8 7-8l-3 4 1 3 3 1 4-3c0 5-4 8-8 7L5 24z"/></symbol>
</defs>
</svg>

<div class="app">
  <header class="head">
    <div class="logo"><svg class="logo-a" viewBox="0 0 26 30"><path fill="#c8232a" d="M0 28L15 1h8v27h-6v-6H9l-3 6zM11 18h6V8z"/><path fill="#8f1d22" d="M17 28V1h6v27z"/></svg><i class="car logo-car"></i></div>
    <div class="head-main">
      <div class="qat">
        <svg class="q dim"><use href="#redo"/></svg><i class="car qc"></i>
        <svg class="q lite"><use href="#undo"/></svg><i class="car qc"></i>
        <svg class="q qs"><use href="#print"/></svg><svg class="q"><use href="#phone"/></svg><svg class="q"><use href="#phonef"/></svg><svg class="q"><use href="#savepen"/></svg><svg class="q"><use href="#save"/></svg><svg class="q"><use href="#open"/></svg><svg class="q"><use href="#newd"/></svg>
        <div class="qcombo qc-ws"><svg class="q-g lite"><use href="#gear"/></svg><span class="ws">三维建模</span><i class="car end"></i></div>
        <svg class="q"><use href="#printgo"/></svg><svg class="q"><use href="#mon"/></svg><svg class="q"><use href="#mon2"/></svg><svg class="q"><use href="#roll"/></svg><svg class="q"><use href="#findd"/></svg>
        <div class="qcombo qc-ly"><svg class="q-s"><use href="#bulb"/></svg><svg class="q-s"><use href="#sun"/></svg><svg class="q-s"><use href="#lock"/></svg><b class="swatch"></b><span class="zero">0</span><i class="car end"></i></div>
        <svg class="q"><use href="#teapot"/></svg><svg class="q q-more"><use href="#qmore"/></svg>
        <div class="title">Drawing1.dwg</div><i class="tri"></i>
        <div class="search">键入关键字或短语</div>
        <svg class="q q-b"><use href="#bino"/></svg><svg class="q q-u"><use href="#user"/></svg><span class="login">登录</span><i class="car c-login"></i>
        <svg class="q q-cart"><use href="#cart"/></svg><svg class="q q-ad"><use href="#adsk"/></svg><i class="car qc"></i><span class="sep"></span>
        <svg class="q q-h"><use href="#help"/></svg><i class="car qc"></i>
        <div class="winctl"><svg class="w"><use href="#wmin"/></svg><svg class="w"><use href="#wmax"/></svg><svg class="w"><use href="#wx"/></svg></div>
      </div>
      <nav class="menubar">
        <span>文件(F)</span><span>编辑(E)</span><span>视图(V)</span><span>插入(I)</span><span>格式(O)</span><span>工具(T)</span><span>绘图(D)</span><span>标注(N)</span><span>修改(M)</span><span>窗口(W)</span><span>帮助(H)</span><span>ET扩展工具(X)</span><span>参数(P)</span><span>YQARCH</span><span class="mt1">源泉设计</span><span class="mt2">YQArch Pull-down Menu</span>
        <div class="winctl small"><svg class="w2"><use href="#wmin"/></svg><svg class="w2"><use href="#wmax"/></svg><svg class="w2"><use href="#wx"/></svg></div>
      </nav>
    </div>
  </header>

  <nav class="rtabs">
    <span class="rt on">常用</span><span class="rt">实体</span><span class="rt">曲面</span><span class="rt">网格</span><span class="rt">可视化</span><span class="rt">参数化</span><span class="rt">插入</span><span class="rt">注释</span><span class="rt">视图</span><span class="rt">管理</span><span class="rt">输出</span><span class="rt">附加模块</span><span class="rt">协作</span><span class="rt">精选应用</span><span class="rt">ET扩展工具</span>
    <svg class="dropup"><use href="#dropup"/></svg><i class="car dropc"></i>
  </nav>

  <section class="ribbon">
    <div class="panel p249"><div class="pbody">
      <div class="big b78"><svg class="bi"><use href="#bigbox"/></svg><span class="l1">长方体</span><i class="car bc"></i></div>
      <div class="big b50"><svg class="bi"><use href="#extrude"/></svg><span class="l1">拉伸</span><i class="car bc"></i></div>
      <div class="stack2">
        <div class="row"><svg class="i"><use href="#polys"/></svg><span>多段体</span></div>
        <div class="row"><svg class="i"><use href="#press"/></svg><span>按住并拖动</span></div>
      </div>
    </div><div class="ptitle">建模<i class="car"></i></div></div>

    <div class="panel p86"><div class="pbody">
      <div class="big b53"><svg class="bi"><use href="#smooth"/></svg><span class="l1">平滑</span><span class="l2">对象</span></div>
      <div class="col1"><svg class="i"><use href="#meshp"/></svg><svg class="i"><use href="#meshm"/></svg><svg class="i"><use href="#meshs"/></svg></div>
    </div><div class="ptitle ar">网格<svg class="cn"><use href="#corner"/></svg></div></div>

    <div class="panel p169"><div class="pbody g-solid">
      <svg class="i"><use href="#uni"/></svg><svg class="i"><use href="#sub"/></svg><div class="row r0"><svg class="i"><use href="#edges"/></svg><span>提取边</span><i class="car rc"></i></div>
      <svg class="i"><use href="#inter"/></svg><svg class="i"><use href="#press2"/></svg><div class="row r0"><svg class="i"><use href="#extf"/></svg><span>拉伸面</span><i class="car rc"></i></div>
      <svg class="i"><use href="#unionb"/></svg><svg class="i"><use href="#fillet3"/></svg><div class="row r0"><svg class="i"><use href="#slice"/></svg><span>分割</span><i class="car rc2"></i></div>
    </div><div class="ptitle">实体编辑<i class="car"></i></div></div>

    <div class="panel p117"><div class="pbody g-draw">
      <svg class="i"><use href="#d-poly"/></svg><svg class="i"><use href="#d-3d"/></svg><svg class="i"><use href="#d-arc"/></svg><i class="car"></i>
      <svg class="i"><use href="#d-spl"/></svg><svg class="i"><use href="#d-line"/></svg><svg class="i"><use href="#d-cir"/></svg><i class="car"></i>
      <svg class="i"><use href="#d-pgn"/></svg><svg class="i"><use href="#d-rect"/></svg><svg class="i"><use href="#d-ell"/></svg><i class="car"></i>
    </div><div class="ptitle">绘图<i class="car"></i></div></div>

    <div class="panel p181"><div class="pbody g-mod">
      <svg class="i"><use href="#m-mirror"/></svg><svg class="i"><use href="#m-3dm"/></svg><svg class="i"><use href="#m-move"/></svg><svg class="i"><use href="#m-arr"/></svg><svg class="i"><use href="#m-trim"/></svg><i class="car"></i>
      <svg class="i"><use href="#m-box"/></svg><svg class="i"><use href="#m-globe"/></svg><svg class="i"><use href="#m-rot"/></svg><svg class="i"><use href="#m-str"/></svg><svg class="i"><use href="#m-fil"/></svg><i class="car"></i>
      <svg class="i"><use href="#m-pen"/></svg><svg class="i"><use href="#m-tri"/></svg><svg class="i"><use href="#m-scale"/></svg><svg class="i"><use href="#m-off"/></svg><svg class="i"><use href="#m-grid"/></svg><i class="car"></i>
    </div><div class="ptitle">修改<i class="car"></i></div></div>

    <div class="panel p78"><div class="pbody">
      <div class="big b78"><svg class="bi"><use href="#section"/></svg><span class="l1">截面</span><span class="l2">平面</span></div>
    </div><div class="ptitle ar">截面<i class="car"></i><svg class="cn"><use href="#corner"/></svg></div></div>

    <div class="panel p180"><div class="pbody g-ucs">
      <svg class="i"><use href="#u-bulb"/></svg><i class="car"></i><svg class="i"><use href="#u-mon"/></svg><svg class="i"><use href="#u-a"/></svg><svg class="i"><use href="#u-tab"/></svg><svg class="i"><use href="#u-glb"/></svg>
      <svg class="i"><use href="#u-x"/></svg><i class="car"></i><svg class="i"><use href="#u-b"/></svg><svg class="i"><use href="#u-c"/></svg><svg class="i"><use href="#u-z"/></svg><svg class="i"><use href="#u-3"/></svg>
      <svg class="i"><use href="#u-box"/></svg><i class="car"></i><div class="combo c-front"><svg class="ci"><use href="#frontb"/></svg><span>前视</span><i class="car end"></i></div>
    </div><div class="ptitle ar">坐标<svg class="cn"><use href="#corner"/></svg></div></div>

    <div class="panel p169"><div class="pbody g-view">
      <div class="combo"><svg class="ci"><use href="#real"/></svg><span>真实</span><i class="car end"></i></div>
      <div class="combo"><svg class="ci"><use href="#unsaved"/></svg><span>未保存的视图</span><i class="car end"></i></div>
      <div class="row vp"><svg class="ci"><use href="#single"/></svg><span>单个视口</span><i class="car"></i></div>
    </div><div class="ptitle">视图<i class="car"></i></div></div>

    <div class="panel p214"><div class="pbody">
      <div class="hide"><svg class="bi"><use href="#hide"/></svg><span class="l1">剔除</span></div>
      <div class="big b88"><svg class="bi"><use href="#nofil"/></svg><span class="l1">无过滤器</span><i class="car bc"></i></div>
      <div class="big b70"><svg class="bi"><use href="#gizmo"/></svg><span class="l1">移动</span><span class="l2">小控件<i class="car up"></i></span></div>
    </div><div class="ptitle">选择</div></div>

    <div class="panel p315"><div class="pbody">
      <div class="big b53"><svg class="bi"><use href="#layerp"/></svg><span class="l1">图层</span><span class="l2">特性</span></div>
      <div class="g-layer">
        <div class="combo c-layer"><svg class="s"><use href="#bulb"/></svg><svg class="s"><use href="#sun"/></svg><svg class="s"><use href="#lock"/></svg><b class="swatch"></b><span class="zero">0</span><i class="car end"></i></div>
        <svg class="i"><use href="#l-bulb"/></svg><svg class="i"><use href="#l-arrow"/></svg><svg class="i"><use href="#l-snow"/></svg><svg class="i"><use href="#l-lockb"/></svg><svg class="i"><use href="#l-cur"/></svg><span class="tx">置为当前</span>
        <svg class="i"><use href="#l-yb"/></svg><svg class="i"><use href="#l-arrow"/></svg><svg class="i"><use href="#l-ys"/></svg><svg class="i"><use href="#l-yl"/></svg><svg class="i"><use href="#l-match"/></svg><span class="tx">匹配图层</span>
      </div>
    </div><div class="ptitle">图层<i class="car"></i></div></div>

    <div class="panel p85"><div class="pbody">
      <div class="big b56"><span class="grpi"><svg class="bi"><use href="#grp"/></svg><svg class="starb"><use href="#star"/></svg></span><span class="l1">组</span></div>
      <div class="col1 c29"><svg class="i"><use href="#grpx"/></svg><svg class="i"><use href="#grpe"/></svg><span class="sel"><svg class="i"><use href="#grps"/></svg></span></div>
    </div><div class="ptitle">组<i class="car"></i></div></div>

    <div class="panel p77"><div class="pbody">
      <div class="big b77"><svg class="bi"><use href="#base"/></svg><span class="l1">基点</span><i class="car bc"></i></div>
    </div><div class="ptitle ar">视图<i class="car"></i><svg class="cn"><use href="#corner"/></svg></div></div>
  </section>

  <div class="doctabs">
    <div class="dt dt1">开始</div>
    <div class="dt dt2">Drawing1*<svg class="dtx"><use href="#wx"/></svg></div>
    <div class="dt dt3">+</div>
  </div>

  <main class="view">
    <svg class="axis" viewBox="0 0 1920 757"><path stroke="#6a3036" stroke-width="1.300" d="M0 618L1866 494"/></svg>
    <div class="vlabel">[-]自定义视图[真实]</div>

    <svg class="model" viewBox="0 0 1020 1080">
      <defs>
        <linearGradient id="cyl" x1="0" x2="1"><stop offset="0" stop-color="#5f80c4"/><stop offset=".45" stop-color="#7f9fe0"/><stop offset=".75" stop-color="#6a8acb"/><stop offset="1" stop-color="#4a69a6"/></linearGradient>
        <linearGradient id="holeg" x1="0" x2="1"><stop offset="0" stop-color="#3f5a94"/><stop offset=".6" stop-color="#7a9adb"/><stop offset="1" stop-color="#86a5e6"/></linearGradient>
        <linearGradient id="ribg" x1="0" x2="0" y1="0" y2="1"><stop offset="0" stop-color="#84a6e6"/><stop offset="1" stop-color="#7294d8"/></linearGradient>
        <clipPath id="sil"><path d="M262 140C320 75 400 45 470 45C540 50 590 100 615 150L640 240L680 370L745 610L780 760L812 862L815 960C810 985 785 998 750 1005L250 1040H190C160 1035 140 1020 128 990L90 850L88 760L190 370L240 190z"/></clipPath>
        <filter id="glow" x="-10%" y="-10%" width="120%" height="120%"><feGaussianBlur stdDeviation="4"/></filter>
      </defs>
      <path class="m-glow" filter="url(#glow)" d="M262 140C320 75 400 45 470 45C540 50 590 100 615 150L640 240L680 370L745 610L780 760L812 862L815 960C810 985 785 998 750 1005L250 1040H190C160 1035 140 1020 128 990L90 850L88 760L190 370L240 190z"/>
      <path fill="#6a8bcf" d="M262 140C320 75 400 45 470 45C540 50 590 100 615 150L640 240L680 370L745 610L780 760L812 862L815 960C810 985 785 998 750 1005L250 1040H190C160 1035 140 1020 128 990L90 850L88 760L190 370L240 190z"/>
      <path fill="url(#cyl)" d="M262 140C320 75 400 45 470 45C540 50 590 100 615 150L648 250C600 190 530 180 470 182C380 185 310 220 275 340L240 190z"/>
      <ellipse cx="468" cy="357" rx="197" ry="173" fill="#6b8ccf"/>
      <path fill="#6484c8" d="M135 905C160 945 200 950 250 952L720 920C770 910 800 890 812 862L815 960C810 985 785 998 750 1005L250 1040H190C160 1035 140 1020 128 990z"/>
      <path fill="url(#ribg)" d="M415 565L512 560L538 930L437 938z"/>
      <path fill="#5f80c4" d="M395 530H412V565L437 938L395 785z"/>
      <ellipse cx="468" cy="358" rx="98" ry="88" fill="url(#holeg)"/>
      <path fill="#0f1723" d="M395 308C430 275 470 268 500 275C480 300 430 312 395 308z"/>
      <g class="m-lines">
        <ellipse cx="468" cy="357" rx="197" ry="173"/>
        <ellipse cx="468" cy="358" rx="98" ry="88"/>
        <path d="M430 315L462 420M490 55L525 178M270 135L305 265M238 210L252 350M245 240L110 785M88 760L100 850L135 905L125 985"/>
        <path d="M105 803L395 785M530 775L780 760M105 803L135 905C160 945 200 950 250 952L720 920C770 910 800 890 812 862"/>
        <path d="M175 945L178 1030M250 952V1040M722 920L725 1005M790 895V985"/>
        <path d="M395 530V785L437 938M412 535V565M415 565L512 560V530M415 565L437 938L538 930L512 560"/>
        <path d="M190 1040L750 1005"/>
        <ellipse cx="270" cy="880" rx="100" ry="47"/><path d="M172 895C190 860 350 860 368 895"/><ellipse cx="272" cy="907" rx="50" ry="22"/><path d="M260 835V860M265 890V925"/>
        <ellipse cx="665" cy="855" rx="100" ry="47"/><path d="M567 870C590 835 745 835 763 870"/><ellipse cx="665" cy="880" rx="50" ry="22"/><path d="M650 808V833M658 865V900"/>
        <path class="m-edge" d="M262 140C320 75 400 45 470 45C540 50 590 100 615 150L640 240L680 370L745 610L780 760L812 862L815 960C810 985 785 998 750 1005L250 1040H190C160 1035 140 1020 128 990L90 850L88 760L190 370L240 190z"/>
      </g>
      <g class="m-grid" clip-path="url(#sil)">
        <path d="M194 0V1080M334 0V1080M474 0V1080M614 0V1080M754 0V1080"/>
        <path d="M0 171L1020 104M0 295L1020 228M0 419L1020 352M0 544L1020 477M0 668L1020 601M0 792L1020 725M0 916L1020 849M0 1040L1020 973"/>
      </g>
    </svg>

    <div class="pickbox"></div>
    <div class="tooltip"><span>选择对象或</span><svg class="tipi" viewBox="0 0 12 12"><rect width="12" height="12" fill="#d7d7d7"/><path fill="#666" d="M4 2h4v4h2L6 9 2 6h2zM2 10h8v1H2z"/></svg></div>

    <svg class="cube" viewBox="0 0 480 350">
      <ellipse cx="240" cy="201" rx="190" ry="92" fill="none" stroke="#3f4754" stroke-width="28"/>
      <path fill="#c3c5c7" d="M158 11L308 1L332 66L165 76z"/>
      <path fill="#b3b5b7" d="M165 76L332 66L330 201L175 216z"/>
      <path fill="none" stroke="#444" stroke-dasharray="6 4" d="M158 11L165 76L332 66M165 76L175 216"/>
      <text class="cube-t" transform="translate(250 171) rotate(-3)">上</text>
      <text class="cube-b" transform="translate(242 16) rotate(177) scale(1.300 .6)">东</text>
      <text class="cube-c" transform="translate(20 216) rotate(-4) scale(1 .7)">西</text>
      <text class="cube-c" transform="translate(395 176) rotate(20) scale(1 .6)">东</text>
      <text class="cube-c" transform="translate(240 323) rotate(5) scale(1 .75)">南</text>
    </svg>
    <div class="ucsname">未命名<i class="car outline"></i></div>

    <aside class="navbar">
      <svg viewBox="0 0 40 260">
        <g fill="none" stroke="#606873" stroke-width="1.800">
          <circle cx="31" cy="6" r="3"/>
          <path d="M6 46c-3-8-3-14 0-20 5-3 22-3 29 0 1 8 0 18-3 24-4 4-16 4-26-4z"/>
          <circle cx="19" cy="36" r="12"/><circle cx="19" cy="36" r="7"/>
          <path d="M6 88c3 8 8 14 14 14 7 0 11-8 12-18l2-6-3 2-2 4-1-8-2 0-1 7-1-8-3 0 0 8-2-7-3 0 1 13-6-3z"/>
          <path d="M6 108l16 18M24 108L6 126M5 108h7M5 108v7M25 108h-7M25 108v7M5 127h7M5 127v-7"/><circle cx="27" cy="128" r="6"/><path d="M31 133l5 5"/>
          <path d="M20 157v26M15 161l5-5 5 5"/><ellipse cx="20" cy="171" rx="13" ry="6"/>
          <path d="M6 208h8v7H6zM16 208h8v7h-8zM26 208h8v7h-8zM6 219h20v16H6z"/>
          <rect x="28" y="248" width="7" height="7" rx="3"/>
        </g>
        <path fill="#606873" d="M12 222l8 5-8 5zM18 146h5l-2.500 3zM18 193h5l-2.500 3z"/>
      </svg>
    </aside>
    <div class="strip"></div>
    <div class="wm">NikolaHa</div>

    <svg class="ucs" viewBox="0 0 100 110">
      <path stroke="#57b96a" fill="none" d="M20 3l7 9 7-9M27 12v13"/>
      <path stroke="#3e8f44" stroke-width="6" d="M24 22v50"/>
      <path stroke="#a84848" stroke-width="7" d="M24 75l60-6"/>
      <path stroke="#3a78d0" stroke-width="7" d="M24 73l9 29"/>
      <path stroke="#c7474a" fill="none" d="M79 50l14 16M93 50L79 66"/>
      <path stroke="#3b82e0" fill="none" d="M33 84h10L30 98h12"/>
    </svg>

    <div class="cmdwrap">
      <div class="hist h1">命令: _VIEWBASE</div>
      <div class="hist">指定模型源 [模型空间(M)/文件(F)] &lt;模型空间&gt;: _M</div>
      <div class="hist">选择对象或 [整个模型(E)] &lt;整个模型&gt;: 找到 1 个</div>
      <div class="cmdrow">
        <div class="cmdtools"><i class="grip"></i><svg class="wx"><use href="#wx"/></svg><svg class="wr"><use href="#wrench"/></svg></div>
        <div class="cmdinput"><svg class="term"><use href="#term"/></svg><i class="car dk"></i><b class="cmdname">VIEWBASE</b><span>选择对象或 [<em class="chip">整个模型(<u>E</u>)</em>] &lt;整个模型&gt;:</span><i class="car dk up2"></i></div>
      </div>
    </div>
  </main>

  <footer class="status">
    <div class="ltabs"><span class="lt on">模型</span><span class="lt">布局1</span><span class="lt">布局2</span><span class="lt">布局3</span><span class="lplus">+</span></div>
    <div class="sg m3"><span class="st w35 txt">模型</span><span class="st w29 a"><svg><use href="#s-grid"/></svg></span><span class="st w30"><svg><use href="#s-dots"/></svg></span><span class="st w22"><i class="car"></i></span></div>
    <div class="sg m3"><span class="st w31"><svg><use href="#s-step"/></svg></span><span class="st w29 a"><svg><use href="#s-plus"/></svg></span><span class="st w31"><svg><use href="#s-l"/></svg></span><span class="st w30"><svg><use href="#s-pol"/></svg></span><span class="st w18"><i class="car"></i></span><span class="st w28"><svg><use href="#s-os"/></svg></span><span class="st w20"><i class="car"></i></span></div>
    <div class="sg m1 pl2"><span class="st w29 a"><svg><use href="#s-ang"/></svg></span><span class="st w29 a"><svg><use href="#s-rect"/></svg></span><span class="st w20"><i class="car"></i></span></div>
    <div class="sg m3"><span class="st w32"><svg><use href="#s-lw"/></svg></span><span class="st w29 a"><svg><use href="#s-chk"/></svg></span><span class="st w32"><svg><use href="#s-selc"/></svg></span><span class="st w29 a"><svg><use href="#s-3d"/></svg></span><span class="st w20"><i class="car"></i></span></div>
    <div class="sg m2 pl1"><span class="st w29 a"><svg><use href="#s-axes"/></svg></span><span class="st w29"><svg><use href="#s-blue"/></svg></span><span class="st w21"><i class="car"></i></span><span class="st w29 a"><svg><use href="#s-giz"/></svg></span><span class="st w20"><i class="car"></i></span></div>
    <div class="sg m4"><span class="st w29 a"><svg><use href="#s-anno"/></svg></span><span class="st w30"><svg><use href="#s-anno2"/></svg></span><span class="st w30"><svg><use href="#s-anno3"/></svg></span><span class="st w41 txt ratio">1:1<i class="car"></i></span></div>
    <div class="sg m3"><span class="st w30"><svg><use href="#gear"/></svg></span><span class="st w19"><i class="car"></i></span><span class="st w29 a ml2"><svg class="plus" viewBox="0 0 24 24"><path fill="#fff" d="M10.500 1h3v9.500H23v3h-9.500V23h-3v-9.500H1v-3h9.500z"/></svg></span></div>
    <div class="sg m1"><span class="st w30"><svg><use href="#s-ruler"/></svg></span><span class="st w76 txt sm">小数</span><span class="st w15"><i class="car"></i></span></div>
    <div class="sg m3"><span class="st w30"><svg><use href="#s-list"/></svg></span></div>
    <div class="sg m1"><span class="st w30"><svg><use href="#s-win"/></svg></span><span class="st w19"><i class="car"></i></span></div>
    <div class="sg m4"><span class="st w31"><svg><use href="#s-sh"/></svg></span><span class="st w30 b ml2"><svg><use href="#s-perf"/></svg></span></div>
    <div class="sg m4"><span class="st w37"><svg><use href="#s-xo"/></svg></span><span class="st w34"><svg><use href="#s-lsh"/></svg></span></div>
    <div class="sg last"><span class="st w30"><svg><use href="#s-full"/></svg></span><span class="st w31"><svg><use href="#s-menu"/></svg></span></div>
  </footer>

  <footer class="taskbar">
    <svg class="tb-win" viewBox="0 0 20 20"><path fill="#f4f4f4" d="M0 3l8.500-1.200V9.500H0zM9.500 1.600L20 0v9.500H9.500zM0 10.500h8.500v7.700L0 17zM9.500 10.500H20V20L9.500 18.400z"/></svg>
    <svg class="tb-tv" viewBox="0 0 20 24"><path fill="none" stroke="#e8e8e8" stroke-width="1.300" d="M1 1v3h12V1M1 9h12v6H1zM1 23v-3h12v3M18 0v4M18 9v6M18 20v4"/></svg>
    <div class="tb-cad"><span class="tb-a"><svg viewBox="0 0 26 30"><path fill="#c8343a" d="M1 28L15 1h8v27h-6v-6H9l-3 6zM11 18h6V8z"/><path fill="#96252a" d="M17 28V1h6v27z"/></svg></span></div>
    <div class="tb-rec"><svg viewBox="0 0 30 30"><circle cx="15" cy="15" r="13.500" fill="none" stroke="#f4f4f4" stroke-width="2"/><circle cx="15" cy="15" r="9" fill="#e22222"/></svg></div>
    <div class="tray">
      <svg class="t-plug" viewBox="0 0 14 24"><path fill="#f4f4f4" d="M2 0h2v6h6V0h2v6h2v6c0 3-2 5-5 5v7H5v-7c-3 0-5-2-5-5V6h2z"/></svg>
      <div class="t-batt"><span>100%</span></div>
      <svg class="t-chev" viewBox="0 0 18 10"><path fill="none" stroke="#e6e6e6" stroke-width="1.300" d="M1 9l8-8 8 8"/></svg>
      <svg class="t-pw" viewBox="0 0 22 16"><path fill="none" stroke="#e6e6e6" stroke-width="1.300" d="M5 4h13v10H5zM18 7h3v4h-3M2 1v4M4 1v4M1 5h4v2H1z"/><path fill="#e6e6e6" d="M6 5h11v8H6z"/></svg>
      <svg class="t-wifi" viewBox="0 0 18 18"><path fill="none" stroke="#d9d9d9" d="M1 10c3-5 9-8 14-8M2 14c2-4 6-7 10-7M6 16c1-3 3-5 6-5"/><circle cx="14" cy="15" r="1.500" fill="#e6e6e6"/></svg>
      <svg class="t-vol" viewBox="0 0 20 16"><path fill="none" stroke="#e6e6e6" d="M1 5h3l4-4v14l-4-4H1zM12 5l6 6M18 5l-6 6"/></svg>
      <svg class="t-pen" viewBox="0 0 20 24"><path fill="none" stroke="#f0f0f0" stroke-width="1.300" d="M8 20c-5 4-8 0-5-5l9-12c3-3 7 0 5 3L9 17M5 10c-3 2-3 5-2 7M15 12c4 2 3 6 0 7"/></svg>
      <span class="t-ime">英</span>
      <div class="t-clock"><span>14:00</span><span>2020/4/21</span></div>
      <svg class="t-note" viewBox="0 0 20 22"><path fill="none" stroke="#f0f0f0" stroke-width="1.300" d="M1 1h18v16h-7l-2 3-2-3H1z"/></svg>
    </div>
  </footer>
</div>
</body>
</html>
```

FILE: styles.css
```css
*{box-sizing:border-box;margin:0;padding:0}
html,body{width:1920px;height:1080px;overflow:hidden;background:#1f2733}
body{font-family:"Noto Sans","Noto Sans CJK SC",sans-serif;color:#d7dbe1;font-size:15px;line-height:1}
i,em,u,b{font-style:normal;text-decoration:none}
svg{display:block;flex:none}
.defs{position:absolute;width:0;height:0}
.app{width:1920px;height:1080px;display:flex;flex-direction:column}

.car{display:inline-block;flex:none;width:0;height:0;border:4px solid transparent;border-top:5px solid #c9ccd1;border-bottom:0}

/* header */
.head{display:flex;height:55px;background:#1f2733;flex:none}
.logo{position:relative;width:49px;height:48px;flex:none;background:linear-gradient(#d0d2d4,#b9bbbe);border-bottom:2px solid #15191f;display:flex;align-items:center;padding-left:4px}
.logo-a{width:30px;height:38px}
.logo-car{border-top-color:#3e444e;margin-left:3px;margin-top:8px}
.head-main{flex:1;min-width:0;display:flex;flex-direction:column}
.qat{height:27px;display:flex;align-items:center;padding-left:8px}
.q{width:22px;height:22px;margin:0 4px}
.qs{margin-left:6px}
.qc{margin:0 3px}
.dim{color:#6b7280}
.lite{color:#e3e4e6}
.q-more{width:18px;height:18px;margin-left:5px}
.qcombo{height:27px;background:#3a4354;display:flex;align-items:center;flex:none;position:relative}
.qc-ws{width:223px;padding-left:5px;margin-right:1px}
.qc-ly{width:223px;padding-left:3px;margin-left:1px}
.q-g{width:22px;height:22px}
.ws{margin-left:2px;color:#8e96a2;font-size:15px}
.end{margin-left:auto;margin-right:7px;border-width:5px;border-top-width:6px;border-bottom-width:0}
.q-s{width:20px;height:20px;margin:0 2px}
.swatch{display:block;width:18px;height:18px;background:#fff;border:1px solid #111;margin-left:5px;flex:none}
.zero{margin-left:6px;color:#c8cdd4;font-size:15px}
.title{width:187px;padding-left:38px;font-size:15.500px;color:#dfe2e6;white-space:nowrap;flex:none}
.tri{width:0;height:0;border:5px solid transparent;border-left:6px solid #d7dbe1;border-right:0;flex:none;margin-right:8px}
.search{width:224px;height:26px;flex:none;background:#3a4354;font-style:italic;color:#9aa2ad;font-size:14px;padding:5px 4px;font-weight:700}
.q-b{margin-left:4px;margin-right:0}
.q-u{margin-left:8px;margin-right:0}
.login{margin-left:6px;font-size:15px;width:32px}
.c-login{margin-left:73px}
.q-cart{margin-left:15px;margin-right:5px;width:20px;height:20px}
.q-ad{margin:0 3px;width:20px;height:20px}
.sep{width:1px;height:26px;background:#3a4354;margin:0 8px}
.q-h{margin:0 5px 0 2px;width:22px;height:22px}
.winctl{margin-left:auto;display:flex;align-items:center}
.w{width:22px;height:22px;margin:0 4px}
.small{padding-right:1px}
.w2{width:20px;height:20px;margin:0 1px}
.menubar{height:28px;display:flex;align-items:center;gap:26.500px;padding:2px 0 0 16px;border-bottom:1px solid #3a4250;white-space:nowrap;color:#b9bfc8;font-size:15.500px}
.mt1{margin-left:-12px}
.mt2{margin-left:-15px}

/* ribbon tabs */
.rtabs{height:25px;flex:none;display:flex;align-items:flex-end;padding-left:3px;background:#1f2733;font-size:15px;color:#b9bfc8;white-space:nowrap}
.rt{height:22px;padding:2px 12px 0;display:block}
.rt.on{background:#394252;color:#e9ecf0;padding:2px 15px 0 11px}
.dropup{width:18px;height:12px;margin:0 5px 7px 31px}
.dropc{margin-bottom:8px}

/* ribbon */
.ribbon{height:122px;flex:none;background:#394252;display:flex}
.panel{display:flex;flex-direction:column;border-right:1px solid #29303c;flex:none;font-size:15px}
.p249{width:249px}.p86{width:86px}.p169{width:169px}.p117{width:117px}.p181{width:181px}.p78{width:78px}.p180{width:180px}.p214{width:214px}.p315{width:315px}.p85{width:85px}.p77{width:77px}
.pbody{height:100px;display:flex;white-space:nowrap}
.ptitle{height:22px;display:flex;align-items:center;justify-content:center;gap:8px;position:relative;color:#d7dbe1}
.ptitle .car{border-width:6px 5px 0}
.ar{padding-right:15px}
.cn{position:absolute;right:6px;top:6px;width:9px;height:9px}
.i{width:22px;height:22px}
.ci{width:20px;height:20px}
.s{width:20px;height:20px;margin:0 3px}

.big{display:flex;flex-direction:column;align-items:center;padding-top:7px;flex:none}
.bi{width:42px;height:43px}
.l1{margin-top:2px;line-height:19px;display:block}
.l2{line-height:19px;display:block;position:relative}
.bc{margin-top:5px}
.up{position:absolute;right:-9px;top:1px}
.b78{width:78px}.b50{width:50px}.b53{width:53px}.b88{width:88px}.b70{width:70px}.b56{width:56px}.b77{width:77px}

.stack2{margin-left:10px;padding-top:5px;display:flex;flex-direction:column}
.row{display:flex;align-items:center;height:30.500px;gap:4px}
.r0{gap:4px;width:100%}
.rc{margin-left:7px}
.rc2{margin-left:7px}
.col1{width:33px;padding-top:5px;display:flex;flex-direction:column;align-items:center}
.col1>*{margin:4.250px 0}
.c29{width:29px}
.g-solid,.g-draw,.g-mod,.g-ucs{display:grid;grid-auto-rows:30.500px;padding-top:5px;align-items:center;justify-items:center;height:100px}
.g-solid{grid-template-columns:34px 34px 1fr}
.g-solid .row{justify-self:start;padding-left:6px}
.g-draw{grid-template-columns:34px 34px 32px 16px}
.g-mod{grid-template-columns:34px 34px 32px 34px 30px 16px}
.g-ucs{grid-template-columns:32px 12px 40px 34px 30px 30px}
.combo{height:26px;background:#4a5367;border:1px solid #2b3340;display:flex;align-items:center;padding-left:1px;gap:3px;color:#dfe2e6}
.c-front{grid-column:3/7;justify-self:stretch;margin-left:9px;margin-right:3px;padding-left:3px;gap:2px}
.g-view{display:flex;flex-direction:column;padding:7px 3px 0 4px;gap:5px}
.vp{padding-left:3px;height:25px;gap:7px}
.hide{width:49px;margin:5px 0 0 3px;height:89px;background:#4b6a8d;border:1px solid #6fb0e4;display:flex;flex-direction:column;align-items:center;padding-top:1px}
.hide .bi{width:44px;height:44px}
.hide .l1{margin-top:4px}
.g-layer{width:262px;display:grid;grid-template-columns:29px 27px 38px 27px 25px 1fr;grid-template-rows:30px 30.500px 30.500px;align-items:center;justify-items:center;padding-top:5px}
.c-layer{grid-column:1/7;justify-self:stretch;margin-right:3px;height:27px;padding-left:5px;gap:0}
.tx{justify-self:start;margin-left:4px}
.grpi{display:block;position:relative;width:48px;height:43px}
.grpi .bi{width:28px;height:44px;margin-left:4px}
.starb{position:absolute;right:3px;top:0;width:22px;height:22px}
.col1>.sel{display:block;border:1px solid #6fb0e4;background:#4b6a8d;padding:2px;margin:1px 0 0}

/* doc tabs */
.doctabs{height:34px;flex:none;background:#1f2733;display:flex;align-items:flex-end;padding-left:25px}
.dt{height:29px;display:flex;align-items:center;background:#2f3747;border-radius:10px 10px 0 0;font-size:15px;color:#b6bcc6;flex:none}
.dt1{width:155px;padding-left:14px}
.dt2{width:159px;padding-left:12px;background:#394252;color:#d7dbe1;position:relative}
.dtx{position:absolute;right:19px;top:7px;width:15px;height:15px}
.dt3{width:26px;margin-left:4px;justify-content:center;font-size:20px;font-weight:700;color:#9aa1ac;background:#2f3747}

/* viewport */
.view{position:relative;flex:1;min-height:0;overflow:hidden;border-top:2px solid #3c4554;background-color:#202832;
background-image:
repeating-linear-gradient(90deg,#343c47 -216.600px,#343c47 -215.600px,transparent -215.600px,transparent 17px),
repeating-linear-gradient(90deg,#272f39 -29.720px,#272f39 -28.720px,transparent -28.720px,transparent 17px),
repeating-linear-gradient(176.220deg,transparent 0,transparent 204.600px,#323a44 204.600px,#323a44 205.600px,transparent 205.600px,transparent 206.550px),
repeating-linear-gradient(176.220deg,transparent 0,transparent 39.400px,#272f39 39.400px,#272f39 40.400px,transparent 40.400px,transparent 41.310px)}
.axis{position:absolute;left:0;top:0;width:1920px;height:757px}
.vlabel{position:absolute;left:3px;top:10px;font-size:16px;letter-spacing:.7px;color:#e8eaec;white-space:nowrap}
.model{position:absolute;left:840px;top:132px;width:340px;height:360px}
.m-glow{fill:none;stroke:#3f80ff;stroke-width:9}
.m-lines{fill:none;stroke:#d7e5ff;stroke-width:2.800}
.m-edge{stroke:#a9c6ff;stroke-width:3}
.m-grid{fill:none;stroke:#56627a;stroke-width:2;opacity:.85}
.pickbox{position:absolute;left:1014px;top:319px;width:11px;height:11px;border:1px solid #f2f2f2}
.tooltip{position:absolute;left:1036px;top:341px;width:124px;height:29px;background:#8a8a8a;border:1px solid #111;display:flex;align-items:center;padding:0 3px;color:#111;font-size:15px}
.tipi{width:13px;height:13px;margin-left:auto;margin-right:2px;margin-top:3px}
.cube{position:absolute;left:1740px;top:55px;width:160px;height:117px;overflow:visible}
.cube text{font-family:"Noto Sans CJK SC",sans-serif}
.cube-t{font-size:85px;fill:#5e6266;text-anchor:middle;font-weight:300}
.cube-b{font-size:56px;fill:#5e6266;text-anchor:middle}
.cube-c{font-size:56px;fill:#c4c6c9}
.ucsname{position:absolute;left:1786px;top:182px;width:68px;height:21px;background:#7d808b;border-radius:5px;color:#50535c;font-size:13px;display:flex;align-items:center;padding-left:6px;gap:7px}
.outline{border-top-color:#9da0aa}
.navbar{position:absolute;left:1865px;top:234px;width:40px;height:259px;background:#464e59;border-radius:3px}
.navbar svg{width:40px;height:260px}
.strip{position:absolute;left:1909px;top:0;bottom:0;width:8px;background:#b9d6f2}
.wm{position:absolute;left:1745px;top:285px;width:164px;overflow:hidden;font-family:"Liberation Mono",monospace;font-size:34px;line-height:36px;color:#7fe8e0;white-space:nowrap}
.ucs{position:absolute;left:26px;top:632px;width:100px;height:110px;overflow:visible}
.cmdwrap{position:absolute;left:382px;bottom:0;width:1155px}
.hist{display:table;margin:0 0 6px 76px;height:19px;padding:0 3px;background:#5b5e63;border-radius:2px;color:#cfcfcf;font-family:"Liberation Mono","Noto Sans CJK SC",monospace;font-size:16px;letter-spacing:-.3px;line-height:19px;white-space:nowrap}
.cmdrow{display:flex;height:33px;margin-top:4px}
.cmdtools{width:69px;background:#2a313c;display:flex;align-items:center;padding-left:5px;gap:5px;flex:none;border-radius:4px 0 0 0}
.grip{width:3px;height:22px;border-left:3px dotted #ddd}
.wx{width:14px;height:14px;margin-left:3px}
.wr{width:21px;height:21px;margin-left:7px}
.cmdinput{flex:1;height:30px;background:#fff;border-radius:2px;display:flex;align-items:center;padding:5px 0 0 6px;color:#111;font-family:"Liberation Mono","Noto Sans CJK SC",monospace;font-size:16px;letter-spacing:-.3px;white-space:nowrap}
.term{width:20px;height:20px}
.dk{border-top-color:#666;margin:0 5px}
.cmdname{font-size:15px;margin:0 7px 0 0;letter-spacing:0}
.chip{background:#cdcdcd;border-radius:3px;padding:3px 2px}
.chip u{color:#1a2ec0}
.up2{margin-left:auto;border-top:0;border-bottom:5px solid #666;margin-right:7px}

/* status bar */
.status{height:35px;flex:none;background:#2a313c;border-top:1px solid #444c59;display:flex;padding-top:2px;font-size:15px}
.ltabs{width:629px;flex:none;display:flex;padding-left:14px;align-items:flex-start;font-size:15px;color:#aab1bb;margin-top:-2px}
.lt{width:69px;height:23px;display:flex;align-items:center;justify-content:center;border-radius:0 0 8px 8px;background:#333b49}
.lt.on{width:59px;background:#3c4556;color:#eceef1;font-weight:700}
.lplus{width:28px;height:23px;margin-left:4px;background:#3c4556;font-size:20px;font-weight:700;display:flex;align-items:center;justify-content:center;border-radius:0 0 6px 6px}
.sg{display:flex;height:30px;background:#3a4352;flex:none}
.m1{margin-right:1px}.m2{margin-right:2px}.m3{margin-right:3px}.m4{margin-right:4px}
.pl1{padding-left:1px}.pl2{padding-left:2px}.ml2{margin-left:2px}
.st{display:flex;align-items:center;justify-content:center;flex:none;height:30px;color:#dfe1e4}
.st svg{width:20px;height:20px}
.st .plus{width:22px;height:22px}
.st.a{background:#5a8dc6}
.st.b{background:#5d7896}
.txt{color:#e8eaec;font-size:15px}
.sm{justify-content:flex-start;padding-left:6px}
.ratio{gap:3px;font-size:14px}
.w15{width:15px}.w18{width:18px}.w19{width:19px}.w20{width:20px}.w21{width:21px}.w22{width:22px}.w28{width:28px}.w29{width:29px}.w30{width:30px}.w31{width:31px}.w32{width:32px}.w34{width:34px}.w35{width:35px}.w37{width:37px}.w41{width:41px}.w76{width:76px}
.last{flex:1}

/* taskbar */
.taskbar{height:50px;flex:none;background:#070b12;display:flex;align-items:center;padding-left:20px;position:relative}
.tb-win{width:20px;height:20px}
.tb-tv{width:20px;height:22px;margin-left:40px}
.tb-cad{width:61px;height:50px;margin-left:24px;background:#3b3e44;border-bottom:3px solid #79b6e8;display:flex;align-items:center;justify-content:center}
.tb-a{display:flex;align-items:center;justify-content:center;width:30px;height:30px;background:#e9e1de}
.tb-a svg{width:20px;height:24px}
.tb-rec{width:51px;height:50px;margin-left:6px;border-bottom:3px solid #79b6e8;display:flex;align-items:center;justify-content:center}
.tb-rec svg{width:28px;height:28px}
.tray{margin-left:auto;display:flex;align-items:center;height:50px;padding-right:31px}
.t-plug{width:13px;height:22px}
.t-batt{width:42px;height:22px;margin-left:4px;background:#fff;padding:2px;border-right:3px solid #ccc}
.t-batt span{display:block;width:100%;height:100%;background:#1e9a4e;color:#dff3e6;font-size:13px;line-height:18px;text-align:center}
.t-chev{width:16px;height:9px;margin-left:9px}
.t-pw{width:20px;height:15px;margin-left:12px}
.t-wifi{width:16px;height:16px;margin-left:13px}
.t-vol{width:19px;height:15px;margin-left:11px}
.t-pen{width:19px;height:23px;margin-left:16px}
.t-ime{margin-left:17px;font-size:18px;color:#ececec}
.t-clock{width:100px;display:flex;flex-direction:column;align-items:center;gap:8px;font-size:15px;color:#ececec}
.t-note{width:20px;height:22px;margin-left:13px}
```
